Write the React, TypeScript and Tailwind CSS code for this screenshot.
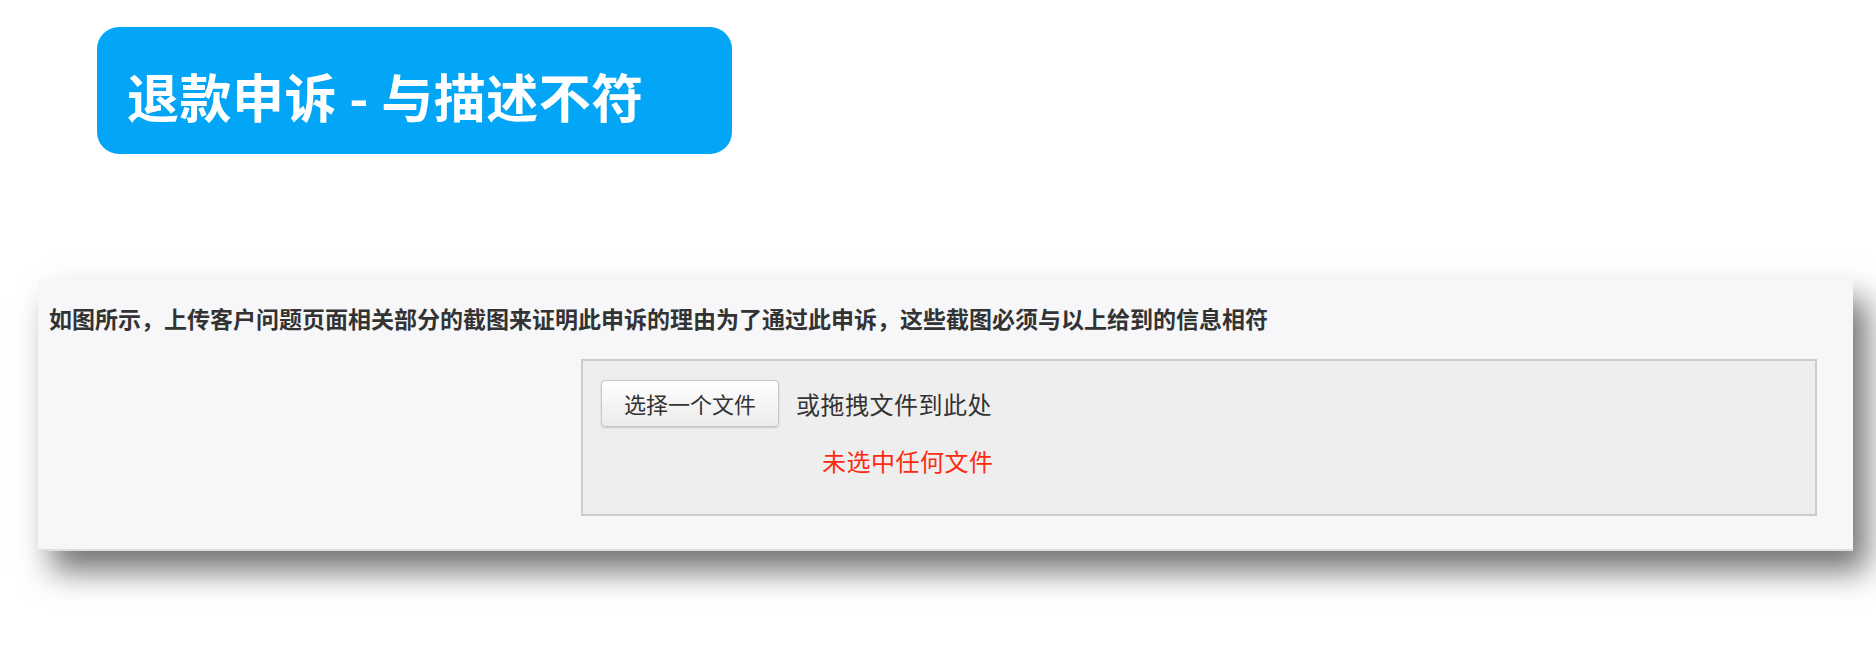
const font = { fontFamily: '"Noto Sans CJK SC", "Noto Sans", sans-serif' };

const App = () => {
  return (
    <div style={font} className="w-[1876px] h-[667px] bg-white overflow-hidden">
      <div className="pt-[27px] pl-[97px]">
        <div className="w-[635px] h-[127px] rounded-[22px] bg-[#03a6f6] flex items-center pl-[30px] pt-[10px]">
          <span className="text-white text-[52px] font-bold leading-none tracking-[0.5px]">
            退款申诉 - 与描述不符
          </span>
        </div>
      </div>

      <div className="mt-[125px] ml-[38px] w-[1815px] h-[272px] bg-[#f7f7f9] border-b-2 border-[#dedede] shadow-[14px_20px_30px_rgba(0,0,0,0.55)] flex flex-col">
        <div className="pl-[11px] pt-[25px] h-[80px] text-[23px] leading-[28px] font-bold text-[#333333]">
          如图所示，上传客户问题页面相关部分的截图来证明此申诉的理由为了通过此申诉，这些截图必须与以上给到的信息相符
        </div>
        <div className="ml-[543px] w-[1236px] h-[157px] border-2 border-[#cccccc] bg-[#eeeeee] pt-[19px] pl-[18px]">
          <div className="flex items-center">
            <button className="w-[178px] h-[47px] rounded-[4px] border border-[#c6c6c6] bg-gradient-to-b from-white to-[#ebebeb] shadow-[0_1px_2px_rgba(0,0,0,0.15)] text-[22px] text-[#333333]">
              选择一个文件
            </button>
            <span className="ml-[17px] text-[24px] text-[#333333] tracking-[0.5px]">或拖拽文件到此处</span>
          </div>
          <div className="ml-[221px] mt-[19px] text-[24px] leading-[30px] text-[#ff2a10] tracking-[0.5px]">
            未选中任何文件
          </div>
        </div>
      </div>
    </div>
  );
};

export default App;
